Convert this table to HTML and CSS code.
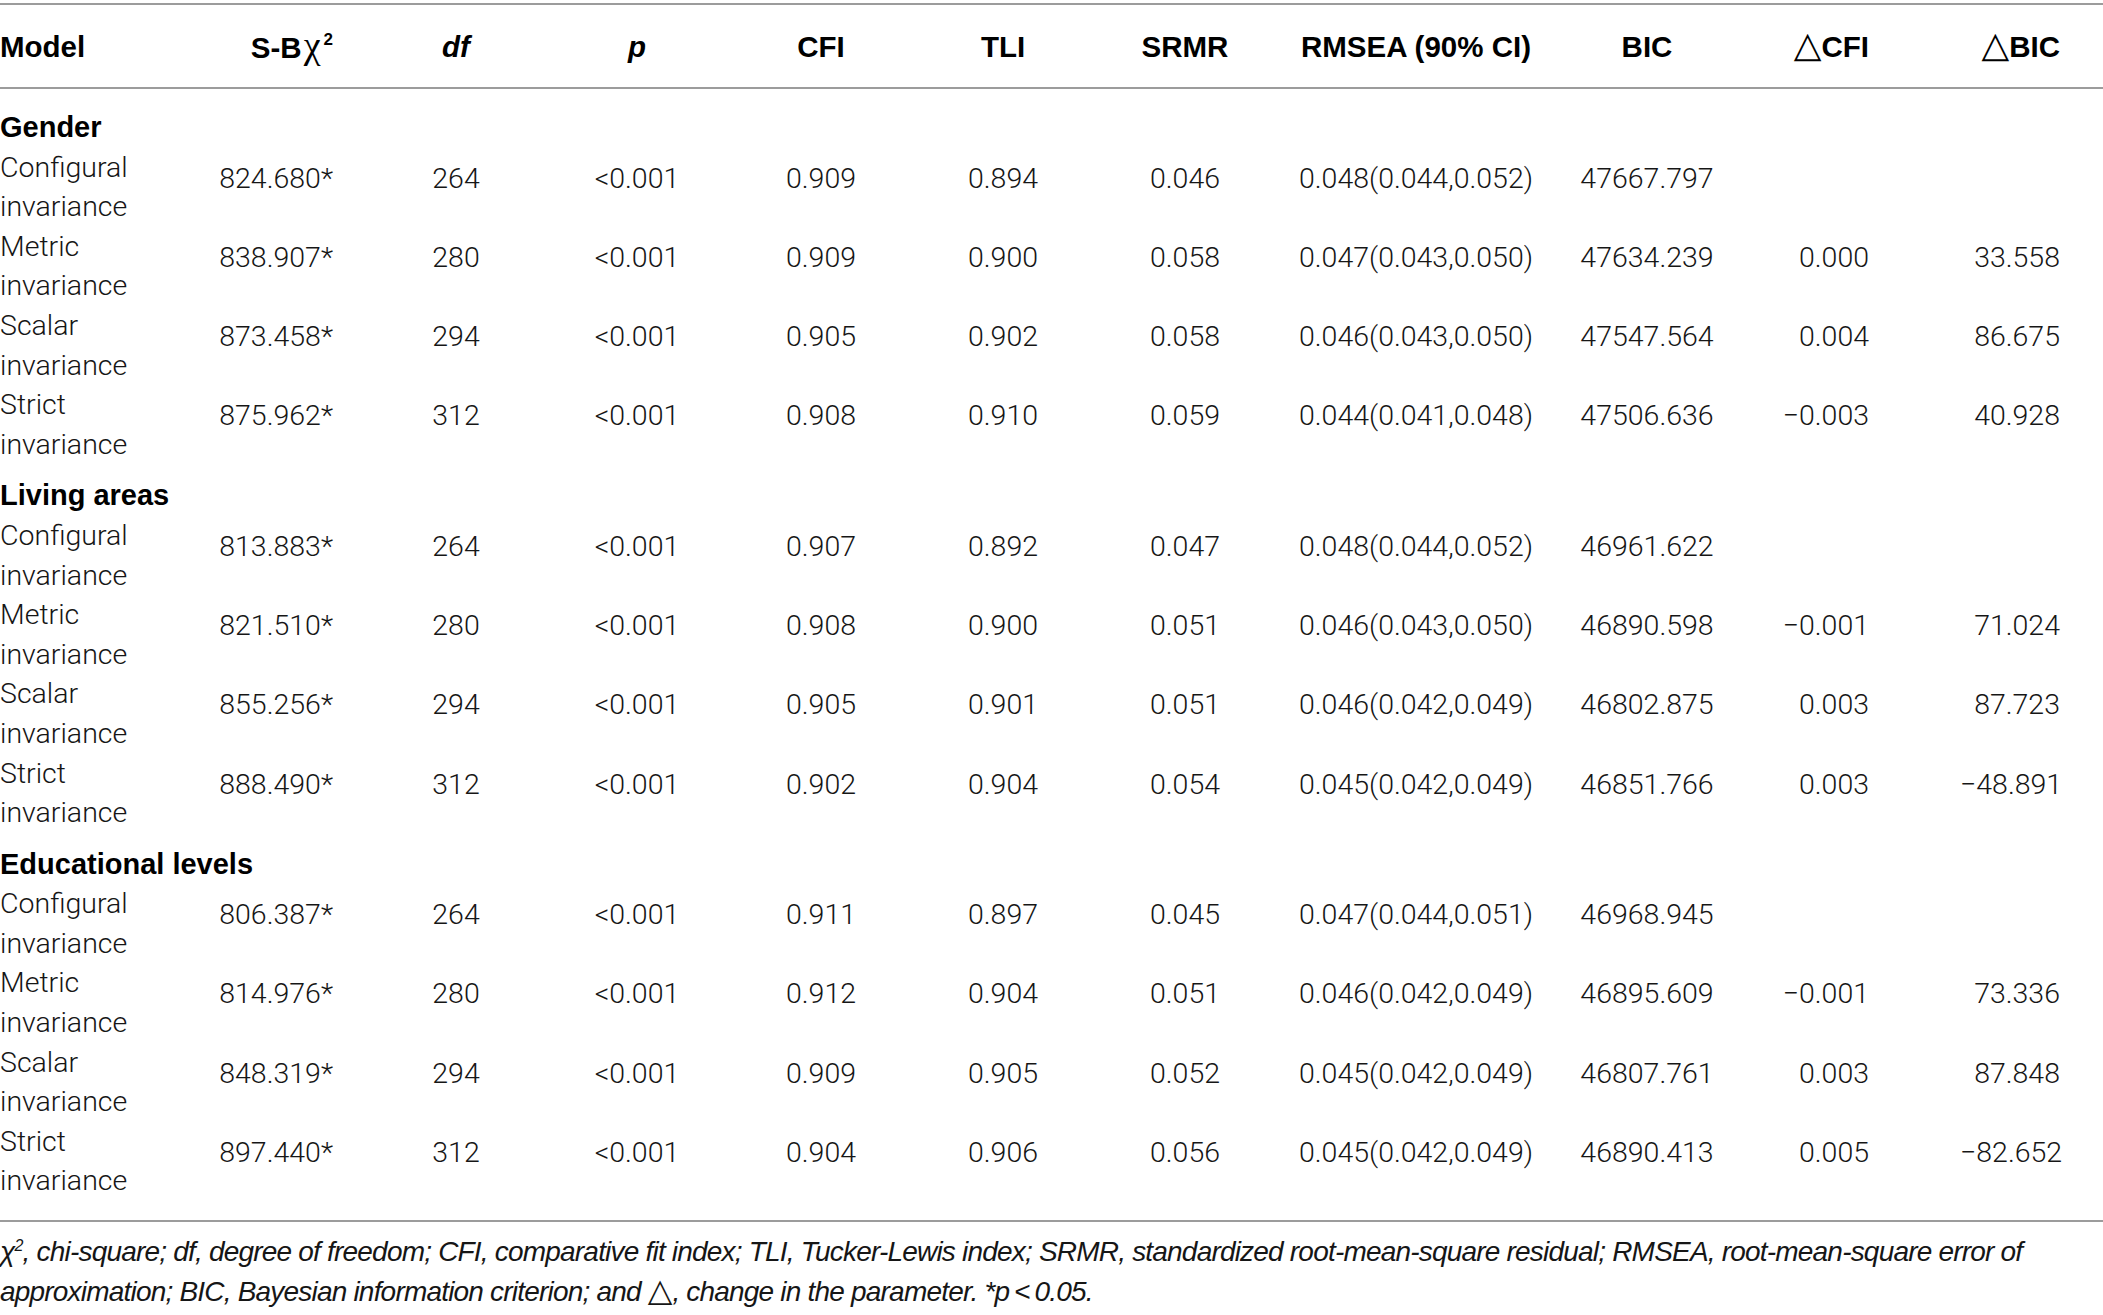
FILE: index.html
```html
<!DOCTYPE html>
<html lang="en">
<head>
    <meta charset="UTF-8">
    <meta name="viewport" content="width=device-width, initial-scale=1.0">
    <title>Measurement invariance</title>
    <link rel="stylesheet" href="styles.css">
</head>
<body>
    <table class="fit-table">
        <colgroup>
            <col><col><col><col><col><col><col><col><col><col><col>
        </colgroup>
        <thead>
            <tr>
                <th>Model</th>
                <th>S-B<span class="chi">χ</span><sup>2</sup></th>
                <th><em>df</em></th>
                <th><em>p</em></th>
                <th>CFI</th>
                <th>TLI</th>
                <th>SRMR</th>
                <th>RMSEA (90% CI)</th>
                <th>BIC</th>
                <th><span class="tri">△</span>CFI</th>
                <th><span class="tri">△</span>BIC</th>
            </tr>
        </thead>
        <tbody>
            <tr class="group first"><td colspan="11">Gender</td></tr>
            <tr><td>Configural invariance</td><td>824.680*</td><td>264</td><td>&lt;0.001</td><td>0.909</td><td>0.894</td><td>0.046</td><td>0.048(0.044,0.052)</td><td>47667.797</td><td></td><td></td></tr>
            <tr><td>Metric invariance</td><td>838.907*</td><td>280</td><td>&lt;0.001</td><td>0.909</td><td>0.900</td><td>0.058</td><td>0.047(0.043,0.050)</td><td>47634.239</td><td>0.000</td><td>33.558</td></tr>
            <tr><td>Scalar invariance</td><td>873.458*</td><td>294</td><td>&lt;0.001</td><td>0.905</td><td>0.902</td><td>0.058</td><td>0.046(0.043,0.050)</td><td>47547.564</td><td>0.004</td><td>86.675</td></tr>
            <tr><td>Strict invariance</td><td>875.962*</td><td>312</td><td>&lt;0.001</td><td>0.908</td><td>0.910</td><td>0.059</td><td>0.044(0.041,0.048)</td><td>47506.636</td><td>−0.003</td><td>40.928</td></tr>

            <tr class="group"><td colspan="11">Living areas</td></tr>
            <tr><td>Configural invariance</td><td>813.883*</td><td>264</td><td>&lt;0.001</td><td>0.907</td><td>0.892</td><td>0.047</td><td>0.048(0.044,0.052)</td><td>46961.622</td><td></td><td></td></tr>
            <tr><td>Metric invariance</td><td>821.510*</td><td>280</td><td>&lt;0.001</td><td>0.908</td><td>0.900</td><td>0.051</td><td>0.046(0.043,0.050)</td><td>46890.598</td><td>−0.001</td><td>71.024</td></tr>
            <tr><td>Scalar invariance</td><td>855.256*</td><td>294</td><td>&lt;0.001</td><td>0.905</td><td>0.901</td><td>0.051</td><td>0.046(0.042,0.049)</td><td>46802.875</td><td>0.003</td><td>87.723</td></tr>
            <tr><td>Strict invariance</td><td>888.490*</td><td>312</td><td>&lt;0.001</td><td>0.902</td><td>0.904</td><td>0.054</td><td>0.045(0.042,0.049)</td><td>46851.766</td><td>0.003</td><td>−48.891</td></tr>

            <tr class="group"><td colspan="11">Educational levels</td></tr>
            <tr><td>Configural invariance</td><td>806.387*</td><td>264</td><td>&lt;0.001</td><td>0.911</td><td>0.897</td><td>0.045</td><td>0.047(0.044,0.051)</td><td>46968.945</td><td></td><td></td></tr>
            <tr><td>Metric invariance</td><td>814.976*</td><td>280</td><td>&lt;0.001</td><td>0.912</td><td>0.904</td><td>0.051</td><td>0.046(0.042,0.049)</td><td>46895.609</td><td>−0.001</td><td>73.336</td></tr>
            <tr><td>Scalar invariance</td><td>848.319*</td><td>294</td><td>&lt;0.001</td><td>0.909</td><td>0.905</td><td>0.052</td><td>0.045(0.042,0.049)</td><td>46807.761</td><td>0.003</td><td>87.848</td></tr>
            <tr class="last"><td>Strict invariance</td><td>897.440*</td><td>312</td><td>&lt;0.001</td><td>0.904</td><td>0.906</td><td>0.056</td><td>0.045(0.042,0.049)</td><td>46890.413</td><td>0.005</td><td>−82.652</td></tr>
        </tbody>
    </table>

    <p class="note">χ<sup>2</sup>, chi-square; df, degree of freedom; CFI, comparative fit index; TLI, Tucker-Lewis index; SRMR, standardized root-mean-square residual; RMSEA, root-mean-square error of approximation; BIC, Bayesian information criterion; and <span class="tri">△</span>, change in the parameter. *p&#8201;&lt;&#8201;0.05.</p>
</body>
</html>
```

FILE: styles.css
```css
body {
    margin: 0;
    background: #fff;
    color: #161616;
    font-family: "Roboto Light", Roboto, "Liberation Sans", sans-serif;
    font-weight: 300;
    font-size: 28.5px;
}
.fit-table {
    width: 2103px;
    table-layout: fixed;
    border-collapse: separate;
    border-spacing: 0;
    margin-top: 3px;
    border-top: 2px solid #9c9c9c;
    border-bottom: 2px solid #9c9c9c;
}
col:nth-child(1) { width: 200px; }
col:nth-child(2) { width: 154px; }
col:nth-child(3) { width: 204px; }
col:nth-child(4) { width: 158px; }
col:nth-child(5) { width: 210px; }
col:nth-child(6) { width: 154px; }
col:nth-child(7) { width: 210px; }
col:nth-child(8) { width: 252px; }
col:nth-child(9) { width: 210px; }
col:nth-child(10) { width: 208px; }
col:nth-child(11) { width: 143px; }

th {
    padding: 20px 0 19px;
    line-height: 40px;
    border-bottom: 2px solid #9c9c9c;
    font-family: "Liberation Sans", Arial, sans-serif;
    font-weight: 700;
    font-size: 29.5px;
    color: #000;
    text-align: center;
    white-space: nowrap;
}
th em {
    font-style: italic;
}
th sup {
    font-size: 17px;
    line-height: 0;
    vertical-align: 13px;
    padding-left: 3px;
}
.chi {
    font-family: "Liberation Serif", serif;
    font-weight: 400;
    font-size: 38px;
    padding-left: 2px;
}
.tri {
    font-family: "DejaVu Sans", sans-serif;
    font-weight: 400;
}
th .tri {
    font-size: 36px;
    line-height: 0;
}
td {
    padding: 11px 0 0;
    line-height: 39.6px;
    text-align: center;
    vertical-align: top;
    white-space: nowrap;
}
td:first-child {
    padding-top: 0;
    text-align: left;
    white-space: normal;
}
th:first-child {
    text-align: left;
}
th:nth-child(2), td:nth-child(2) {
    text-align: right;
    padding-right: 21px;
}
th:nth-child(10), td:nth-child(10) {
    text-align: right;
    padding-right: 91px;
}
th:nth-child(11), td:nth-child(11) {
    text-align: right;
    padding-right: 43px;
}
.group td {
    padding-top: 12px;
    font-family: "Liberation Sans", Arial, sans-serif;
    font-weight: 700;
    font-size: 29px;
    color: #000;
    white-space: nowrap;
}
.group.first td {
    padding-top: 19px;
}
.last td {
    padding-bottom: 19px;
}
.note {
    margin: 11px 0 0;
    font-family: "Liberation Sans", Arial, sans-serif;
    font-style: italic;
    font-weight: 400;
    font-size: 28px;
    letter-spacing: -0.8px;
    line-height: 38px;
}
.note sup {
    font-size: 16px;
    line-height: 0;
}
.note .tri {
    font-style: normal;
    font-size: 32px;
    letter-spacing: 0;
}
```
